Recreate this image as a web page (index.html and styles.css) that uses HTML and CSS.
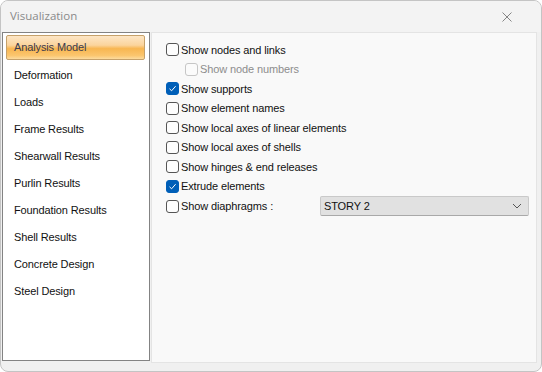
FILE: index.html
```html
<!DOCTYPE html>
<html lang="en">
<head>
    <meta charset="UTF-8">
    <title>Visualization</title>
    <link rel="stylesheet" href="styles.css">
</head>
<body>
    <div class="window">
        <div class="titlebar">
            <span class="title">Visualization</span>
            <svg class="close" width="10" height="10" viewBox="0 0 10 10">
                <path d="M0.5 0.5 L9.5 9.5 M9.5 0.5 L0.5 9.5" stroke="#858585" stroke-width="1" fill="none"/>
            </svg>
        </div>
        <div class="content">
            <ul class="nav-list">
                <li class="nav-item active">Analysis Model</li>
                <li class="nav-item">Deformation</li>
                <li class="nav-item">Loads</li>
                <li class="nav-item">Frame Results</li>
                <li class="nav-item">Shearwall Results</li>
                <li class="nav-item">Purlin Results</li>
                <li class="nav-item">Foundation Results</li>
                <li class="nav-item">Shell Results</li>
                <li class="nav-item">Concrete Design</li>
                <li class="nav-item">Steel Design</li>
            </ul>
            <div class="panel">
                <label class="option"><span class="box"></span>Show nodes and links</label>
                <label class="option sub disabled"><span class="box"></span>Show node numbers</label>
                <label class="option"><span class="box checked"><svg width="9" height="9" viewBox="0 0 9 9"><path d="M1.5 4.8 L3.6 6.8 L7.6 2.2" stroke="#fff" stroke-width="1" fill="none"/></svg></span>Show supports</label>
                <label class="option"><span class="box"></span>Show element names</label>
                <label class="option"><span class="box"></span>Show local axes of linear elements</label>
                <label class="option"><span class="box"></span>Show local axes of shells</label>
                <label class="option"><span class="box"></span>Show hinges &amp; end releases</label>
                <label class="option"><span class="box checked"><svg width="9" height="9" viewBox="0 0 9 9"><path d="M1.5 4.8 L3.6 6.8 L7.6 2.2" stroke="#fff" stroke-width="1" fill="none"/></svg></span>Extrude elements</label>
                <div class="option combo-row">
                    <span class="box"></span>
                    <span class="combo-label">Show diaphragms :</span>
                    <div class="combo">
                        <span>STORY 2</span>
                        <svg width="10" height="6" viewBox="0 0 10 6"><path d="M1 1 L5 5 L9 1" stroke="#555" stroke-width="1" fill="none"/></svg>
                    </div>
                </div>
            </div>
        </div>
    </div>
</body>
</html>
```

FILE: styles.css
```css
* {
    margin: 0;
    padding: 0;
    box-sizing: border-box;
}

body {
    width: 542px;
    height: 372px;
    background: #ffffff;
    font-family: 'Liberation Sans', Arial, sans-serif;
    font-size: 11px;
    letter-spacing: -0.12px;
    color: #111111;
}

.window {
    width: 542px;
    height: 372px;
    background: #f0f0f0;
    border: 1px solid #c4c4c4;
    border-radius: 8px;
    display: flex;
    flex-direction: column;
    overflow: hidden;
}

.titlebar {
    height: 31px;
    flex-shrink: 0;
    background: #f3f3f3;
    display: flex;
    align-items: center;
    justify-content: space-between;
    padding: 0 29px 0 9px;
}

.title {
    font-family: 'Open Sans', sans-serif;
    font-size: 11.5px;
    letter-spacing: 0;
    color: #8a8a8a;
    padding-bottom: 3px;
}

.close {
    display: block;
}

.content {
    display: flex;
    align-items: flex-start;
    gap: 1px;
    padding: 0 4px 0 1px;
}

.nav-list {
    list-style: none;
    width: 148px;
    height: 329px;
    background: #ffffff;
    border: 1px solid #838383;
    padding: 1px 3px 0 3px;
}

.nav-item {
    height: 27px;
    line-height: 25px;
    padding: 2px 0 0 8px;
    color: #111111;
}

.nav-item.active {
    height: 25px;
    line-height: 23px;
    margin: 1px 1px 1px 0;
    padding: 0 0 0 7px;
    color: #3a3a4e;
    border: 1px solid #c6a16a;
    border-radius: 2px;
    background: linear-gradient(#fde6c6 0%, #fbd49c 40%, #f8b651 55%, #fbc66f 85%, #fddc9f 100%);
}

.panel {
    flex: 1;
    height: 331px;
    background: #f9f9f9;
    border: 1px solid #e4e4e4;
    padding: 7px 0 0 14px;
    display: flex;
    flex-direction: column;
}

.option {
    height: 19.5px;
    display: flex;
    align-items: center;
    color: #111111;
}

.box {
    width: 13px;
    height: 13px;
    border: 1px solid #555555;
    border-radius: 3px;
    background: #fdfdfd;
    margin-right: 2px;
    flex-shrink: 0;
    display: flex;
    align-items: center;
    justify-content: center;
}

.box.checked {
    background: #005fb8;
    border-color: #005fb8;
}

.option.sub {
    padding-left: 19px;
}

.option.disabled {
    color: #8d8d8d;
}

.option.disabled .box {
    border-color: #c6c6c6;
    background: #fbfbfb;
}

.combo-row {
    height: 20px;
}

.combo-label {
    width: 139px;
}

.combo {
    width: 209px;
    height: 20px;
    background: #e1e1e1;
    border: 1px solid #c9c9c9;
    border-bottom-color: #a9a9a9;
    border-radius: 2px;
    display: flex;
    align-items: center;
    justify-content: space-between;
    padding: 0 6px 0 3px;
    color: #111111;
}

.combo svg {
    display: block;
}
```
